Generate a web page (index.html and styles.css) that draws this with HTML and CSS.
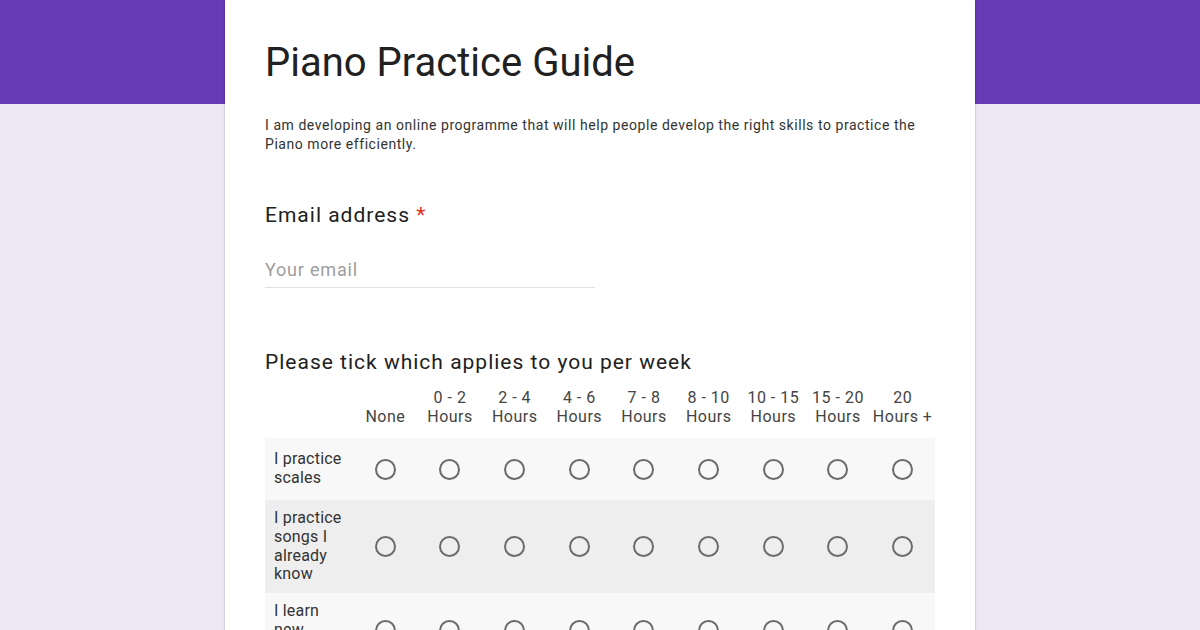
FILE: index.html
```html
<!DOCTYPE html>
<html>
<head>
<meta charset="utf-8">
<link rel="stylesheet" href="styles.css">
</head>
<body>
<div class="card">
  <h1 class="title">Piano Practice Guide</h1>
  <p class="desc">I am developing an online programme that will help people develop the right skills to practice the Piano more efficiently.</p>

  <div class="question">
    <div class="q-label">Email address <span class="req">*</span></div>
    <div class="input">Your email</div>
  </div>

  <div class="question grid-q">
    <div class="q-label">Please tick which applies to you per week</div>
    <div class="grid">
      <div class="ghead">
        <div></div>
        <div class="col">None</div>
        <div class="col">0 - 2<br>Hours</div>
        <div class="col">2 - 4<br>Hours</div>
        <div class="col">4 - 6<br>Hours</div>
        <div class="col">7 - 8<br>Hours</div>
        <div class="col">8 - 10<br>Hours</div>
        <div class="col">10 - 15<br>Hours</div>
        <div class="col">15 - 20<br>Hours</div>
        <div class="col">20<br>Hours +</div>
      </div>
      <div class="grow light">
        <div class="rlabel">I practice scales</div>
        <div class="cell"><span class="radio"></span></div>
        <div class="cell"><span class="radio"></span></div>
        <div class="cell"><span class="radio"></span></div>
        <div class="cell"><span class="radio"></span></div>
        <div class="cell"><span class="radio"></span></div>
        <div class="cell"><span class="radio"></span></div>
        <div class="cell"><span class="radio"></span></div>
        <div class="cell"><span class="radio"></span></div>
        <div class="cell"><span class="radio"></span></div>
      </div>
      <div class="grow dark">
        <div class="rlabel">I practice songs I already know</div>
        <div class="cell"><span class="radio"></span></div>
        <div class="cell"><span class="radio"></span></div>
        <div class="cell"><span class="radio"></span></div>
        <div class="cell"><span class="radio"></span></div>
        <div class="cell"><span class="radio"></span></div>
        <div class="cell"><span class="radio"></span></div>
        <div class="cell"><span class="radio"></span></div>
        <div class="cell"><span class="radio"></span></div>
        <div class="cell"><span class="radio"></span></div>
      </div>
      <div class="grow light">
        <div class="rlabel">I learn new pieces</div>
        <div class="cell"><span class="radio"></span></div>
        <div class="cell"><span class="radio"></span></div>
        <div class="cell"><span class="radio"></span></div>
        <div class="cell"><span class="radio"></span></div>
        <div class="cell"><span class="radio"></span></div>
        <div class="cell"><span class="radio"></span></div>
        <div class="cell"><span class="radio"></span></div>
        <div class="cell"><span class="radio"></span></div>
        <div class="cell"><span class="radio"></span></div>
      </div>
    </div>
  </div>
</div>
</body>
</html>
```

FILE: styles.css
```css
html, body {
  margin: 0;
  padding: 0;
}
body {
  background: linear-gradient(to bottom, #673ab7 0, #673ab7 104px, #ede7f6 104px, #ede7f6 100%);
  min-height: 630px;
  font-family: Roboto, "Liberation Sans", sans-serif;
  overflow: hidden;
}
.card {
  width: 750px;
  margin: 0 auto;
  background: #fff;
  box-shadow: 0 0 2px rgba(0,0,0,0.2), 0 2px 2px rgba(0,0,0,0.12);
  padding: 37px 40px 40px;
  box-sizing: border-box;
  min-height: 700px;
}
.title {
  margin: 0;
  font-size: 40px;
  font-weight: 400;
  line-height: 52px;
  color: #212121;
}
.desc {
  margin: 27px 0 0;
  font-size: 14px;
  letter-spacing: 0.55px;
  line-height: 19px;
  color: #333;
}
.question {
  margin-top: 47px;
}
.q-label {
  font-size: 21px;
  letter-spacing: 1px;
  line-height: 28px;
  color: #212121;
}
.req {
  color: #d93025;
}
.input {
  width: 330px;
  margin-top: 29px;
  font-size: 18px;
  letter-spacing: 0.8px;
  line-height: 24px;
  color: #9e9e9e;
  border-bottom: 1px solid #e0e0e0;
  padding-bottom: 5px;
}
.grid-q {
  margin-top: 60px;
}
.grid {
  width: 670px;
  margin-top: 13px;
}
.ghead, .grow {
  display: grid;
  grid-template-columns: 88px repeat(9, 1fr);
  align-items: center;
}
.ghead {
  align-items: end;
  padding-bottom: 12px;
}
.col {
  text-align: center;
  font-size: 16px;
  letter-spacing: 0.5px;
  line-height: 18.5px;
  color: #444;
}
.light {
  background: #f8f8f8;
}
.dark {
  background: #eeeeee;
}
.grow {
  padding: 9px 0;
  min-height: 62px;
  box-sizing: border-box;
}
.rlabel {
  padding-left: 9px;
  font-size: 16px;
  letter-spacing: 0.2px;
  line-height: 18.75px;
  color: #333;
}
.cell {
  display: flex;
  justify-content: center;
}
.radio {
  width: 21px;
  height: 21px;
  border: 2px solid #6b6b6b;
  border-radius: 50%;
  box-sizing: border-box;
}
```
